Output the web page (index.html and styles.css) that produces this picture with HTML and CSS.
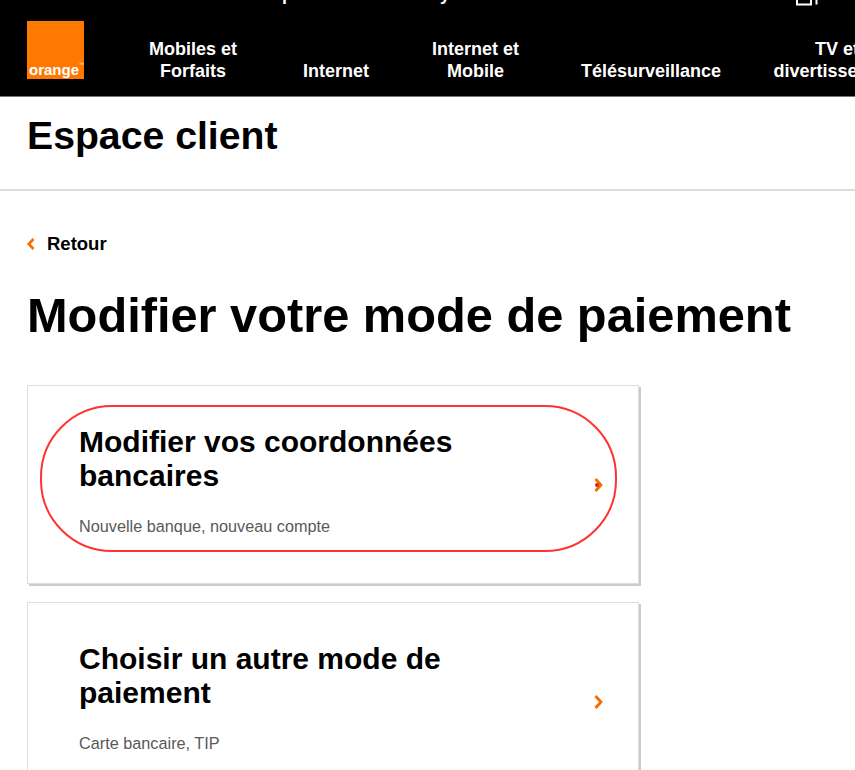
FILE: index.html
```html
<!DOCTYPE html>
<html lang="fr">
<head>
    <meta charset="UTF-8">
    <meta name="viewport" content="width=device-width, initial-scale=1.0">
    <title>Modifier votre mode de paiement</title>
    <link rel="stylesheet" href="styles.css">
</head>
<body>

<header class="site-header">
    <div class="top-strip">
        <span class="strip-text strip-first">p</span>
        <span class="strip-text strip-second">y</span>
        <svg class="strip-icon" width="22" height="6" viewBox="0 0 22 6">
            <path d="M1 0V4.5H15V0M20.5 0V4.5" fill="none" stroke="#fff" stroke-width="2"/>
        </svg>
    </div>
    <div class="nav-row">
        <a class="logo" href="#">
            <span class="logo-word">orange</span><span class="logo-tm">™</span>
        </a>
        <nav class="main-nav">
            <a class="nav-item" href="#">Mobiles et<br>Forfaits</a>
            <a class="nav-item" href="#">Internet</a>
            <a class="nav-item" href="#">Internet et<br>Mobile</a>
            <a class="nav-item" href="#">Télésurveillance</a>
            <a class="nav-item" href="#">TV et<br>divertissement</a>
        </nav>
    </div>
</header>

<div class="space-bar">
    <h2 class="space-title">Espace client</h2>
</div>

<main class="content">
    <a class="back-link" href="#">
        <svg class="chevron" width="9" height="14" viewBox="0 0 9 14">
            <path d="M6.5 2L1.8 7L6.5 12" fill="none" stroke="#f16e00" stroke-width="2.6"/>
        </svg>
        Retour
    </a>

    <h1 class="page-title">Modifier votre mode de paiement</h1>

    <a class="option-card" href="#">
        <div class="option-text">
            <h3 class="option-title">Modifier vos coordonnées bancaires</h3>
            <p class="option-sub">Nouvelle banque, nouveau compte</p>
        </div>
        <svg class="chevron" width="11" height="16" viewBox="0 0 11 16">
            <path d="M2.5 2L8 8L2.5 14" fill="none" stroke="#f16e00" stroke-width="2.8"/>
        </svg>
        <span class="red-outline"></span>
        <span class="red-dot"></span>
    </a>

    <a class="option-card" href="#">
        <div class="option-text">
            <h3 class="option-title">Choisir un autre mode de paiement</h3>
            <p class="option-sub">Carte bancaire, TIP</p>
        </div>
        <svg class="chevron" width="11" height="16" viewBox="0 0 11 16">
            <path d="M2.5 2L8 8L2.5 14" fill="none" stroke="#f16e00" stroke-width="2.8"/>
        </svg>
    </a>
</main>

</body>
</html>
```

FILE: styles.css
```css
html, body {
    margin: 0;
    padding: 0;
    height: 770px;
    overflow: hidden;
}
body {
    font-family: "Liberation Sans", Arial, sans-serif;
    background-color: #fff;
    color: #000;
}
a {
    color: inherit;
    text-decoration: none;
}
.site-header {
    background-color: #000;
    color: #fff;
    height: 96px;
    border-bottom: 1px solid #777;
    overflow: hidden;
}
.top-strip {
    position: relative;
    height: 21px;
}
.strip-text {
    position: absolute;
    top: -15px;
    font-size: 18px;
    font-weight: bold;
    line-height: 18px;
}
.strip-first {
    left: 282px;
}
.strip-second {
    left: 440px;
}
.strip-icon {
    position: absolute;
    top: 0;
    left: 796px;
}
.nav-row {
    display: flex;
    align-items: flex-start;
    padding-left: 27px;
}
.logo {
    position: relative;
    flex: none;
    display: block;
    width: 57px;
    height: 58px;
    background-color: #ff7900;
}
.logo-word {
    position: absolute;
    left: 2px;
    bottom: 1px;
    font-size: 15px;
    font-weight: bold;
    line-height: 16px;
    color: #fff;
}
.logo-tm {
    position: absolute;
    right: 0;
    bottom: 12px;
    font-size: 5px;
    line-height: 6px;
    color: #fff;
}
.main-nav {
    display: flex;
    align-items: flex-end;
    height: 61px;
    margin-left: 63px;
    white-space: nowrap;
}
.nav-item {
    flex: none;
    font-size: 18px;
    font-weight: bold;
    line-height: 22px;
    text-align: center;
}
.nav-item:nth-child(1) {
    width: 92px;
}
.nav-item:nth-child(2) {
    width: 68px;
    margin-left: 63px;
}
.nav-item:nth-child(3) {
    width: 91px;
    margin-left: 60px;
}
.nav-item:nth-child(4) {
    width: 140px;
    margin-left: 60px;
}
.nav-item:nth-child(5) {
    width: 130px;
    margin-left: 51px;
}
.space-bar {
    height: 92px;
    border-bottom: 2px solid #ddd;
    padding-left: 27px;
}
.space-title {
    margin: 0;
    font-size: 39.2px;
    font-weight: bold;
    line-height: 77px;
}
.content {
    padding: 42px 27px 0;
}
.back-link {
    display: flex;
    align-items: center;
    gap: 11px;
    font-size: 18.5px;
    font-weight: bold;
    line-height: 22px;
}
.page-title {
    margin: 30px 0 40px;
    font-size: 48.75px;
    font-weight: bold;
    line-height: 60px;
}
.option-card {
    position: relative;
    box-sizing: border-box;
    display: flex;
    align-items: center;
    justify-content: space-between;
    width: 612px;
    height: 199px;
    margin-bottom: 18px;
    padding: 0 34px 0 51px;
    background-color: #fff;
    border: 1px solid #ddd;
    box-shadow: 2px 2px 0 #ccc;
}
.option-text {
    width: 440px;
    padding-bottom: 9px;
}
.option-title {
    margin: 0 0 23px;
    font-size: 30px;
    font-weight: bold;
    line-height: 34px;
}
.option-sub {
    margin: 0;
    font-size: 16.25px;
    line-height: 20px;
    color: #595959;
}
.red-outline {
    position: absolute;
    left: 12px;
    top: 19px;
    width: 573px;
    height: 143px;
    border: 2px solid #f33;
    border-radius: 72px;
}
.red-dot {
    position: absolute;
    left: 567px;
    top: 97px;
    width: 4px;
    height: 4px;
    border-radius: 50%;
    background-color: #d8201c;
}
```
